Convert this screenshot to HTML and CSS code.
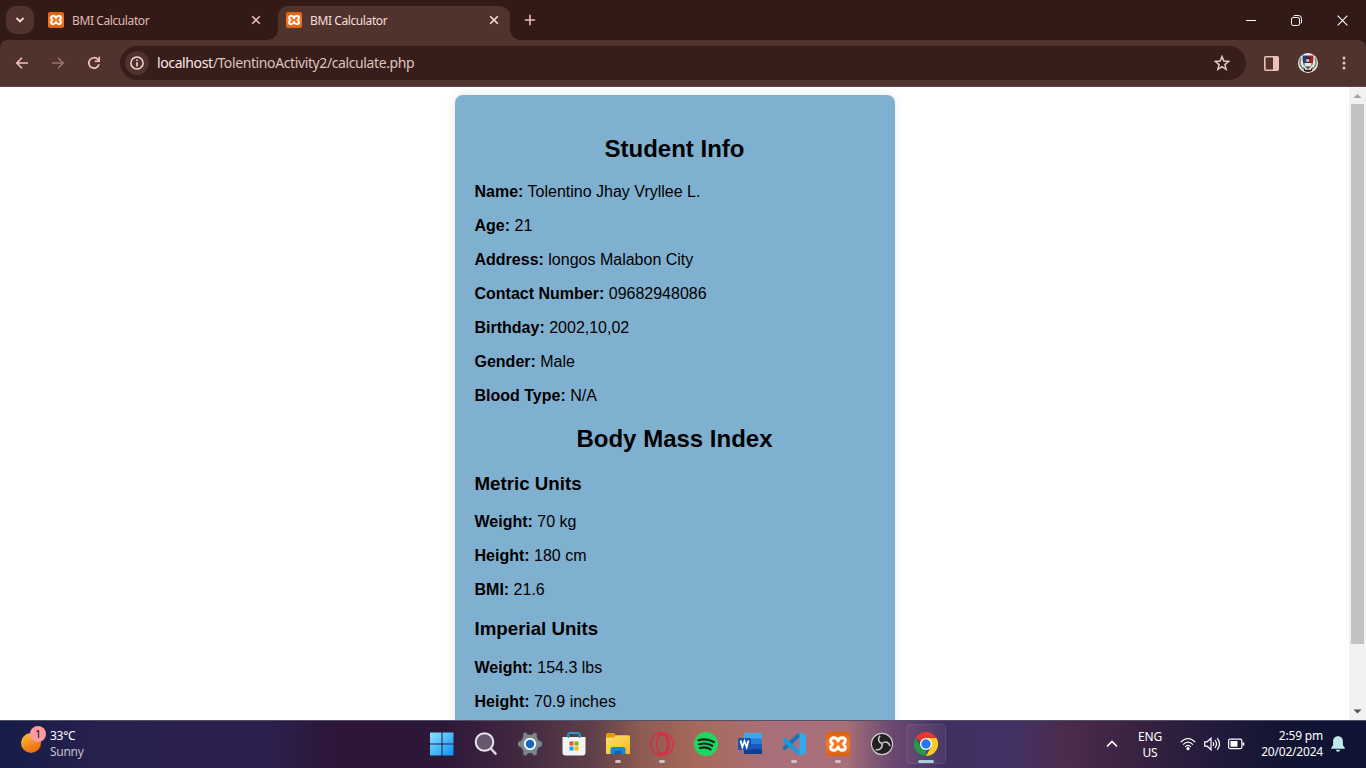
FILE: index.html
```html
<!DOCTYPE html>
<html lang="en">
<head>
<meta charset="utf-8">
<title>BMI Calculator</title>
<link rel="stylesheet" href="styles.css">
</head>
<body>
<svg class="defs" width="0" height="0" aria-hidden="true">
  <defs>
    <linearGradient id="gx" x2="0" y2="1"><stop stop-color="#d9600f"/><stop offset=".5" stop-color="#fb7a24"/><stop offset="1" stop-color="#d9600f"/></linearGradient>
    <symbol id="xampp" viewBox="0 0 24 24">
      <rect width="24" height="24" rx="2.5" fill="url(#gx)"/>
      <path d="M12 9C11 6.500 9.800 5.800 8 5.800 6 5.800 4.600 7 4.600 8.800c0 1.400.9 2.200 2 3.200-1.100 1-2 1.800-2 3.200 0 1.800 1.400 3 3.400 3 1.800 0 3-.7 4-3.200 1 2.500 2.200 3.200 4 3.200 2 0 3.400-1.200 3.400-3 0-1.400-.9-2.200-2-3.200 1.100-1 2-1.800 2-3.200 0-1.800-1.400-3-3.400-3-1.800 0-3 .7-4 3.200z" fill="none" stroke="#fff" stroke-width="3" stroke-linejoin="round"/>
    </symbol>
    <symbol id="close" viewBox="0 0 10 10"><path d="M1.200 1.200l7.600 7.600M8.800 1.200L1.200 8.800" fill="none" stroke="currentColor" stroke-width="1.600"/></symbol>
  </defs>
</svg>
<div class="screen">
  <header class="tabstrip">
    <button class="tab-search"><svg width="10" height="8" viewBox="0 0 10 8"><path d="M1.500 2L5 5.500 8.500 2" fill="none" stroke="#f5dcd8" stroke-width="1.800"/></svg></button>
    <div class="tab"><svg class="fav"><use href="#xampp"/></svg><span class="tab-title">BMI Calculator</span><svg class="x"><use href="#close"/></svg></div>
    <div class="tab active"><svg class="fav"><use href="#xampp"/></svg><span class="tab-title">BMI Calculator</span><svg class="x"><use href="#close"/></svg></div>
    <svg class="plus" viewBox="0 0 12 12"><path d="M6 .8v10.400M.8 6h10.400" stroke="#e9bdb5" stroke-width="1.600"/></svg>
    <div class="win-controls">
      <svg width="10" height="12" viewBox="0 0 10 12"><path d="M0 6.500h10" stroke="#fff"/></svg>
      <svg width="11" height="11" viewBox="0 0 11 11"><path d="M.5 4.200Q.5 2.500 2.200 2.500H6.800Q8.500 2.500 8.500 4.200V8.800Q8.500 10.500 6.800 10.500H2.200Q.5 10.500 .5 8.800zM2.500 1Q3 .5 4 .5H7.500Q10.500.5 10.500 3.500V7Q10.500 8.200 9.800 8.600" fill="none" stroke="#fff"/></svg>
      <svg width="11" height="11" viewBox="0 0 11 11"><path d="M.6.6l9.800 9.800M10.400.6L.6 10.400" stroke="#fff" stroke-width="1.100"/></svg>
    </div>
  </header>
  <div class="toolbar-wrap">
  <nav class="toolbar">
    <svg class="nav-ico" viewBox="0 0 16 16"><path d="M14 8H3M8 2.800L2.800 8 8 13.200" fill="none" stroke="#f2c4bb" stroke-width="1.600"/></svg>
    <svg class="nav-ico dim" viewBox="0 0 16 16"><path d="M2 8h11M8 2.800L13.200 8 8 13.200" fill="none" stroke="#f2c4bb" stroke-width="1.600"/></svg>
    <svg class="nav-ico" viewBox="0 0 16 16"><path d="M13 9.300A5.200 5.200 0 1 1 11.900 4.500L13.300 6" fill="none" stroke="#f2c4bb" stroke-width="1.700"/><path d="M14 1.800V7H8.800V5.500h3.600V1.800z" fill="#f2c4bb"/></svg>
    <div class="omnibox">
      <span class="info"><svg width="14" height="14" viewBox="0 0 14 14"><circle cx="7" cy="7" r="6.100" fill="none" stroke="#f5dcd8" stroke-width="1.500"/><path d="M7 6.200v4.200M7 3.500V5" stroke="#f5dcd8" stroke-width="1.600"/></svg></span>
      <span class="url"><b>localhost</b>/TolentinoActivity2/calculate.php</span>
      <svg class="star" width="16" height="16" viewBox="0 0 16 16"><path d="M8 1.600l1.800 4.500 4.800.4-3.700 3.100 1.200 4.700L8 11.700l-4.100 2.600 1.200-4.700L1.400 6.500l4.800-.4z" fill="none" stroke="#e3c9c4" stroke-width="1.500"/></svg>
    </div>
    <svg class="panel" width="15" height="15" viewBox="0 0 15 15"><rect x=".8" y=".8" width="13.400" height="13.400" rx="1" fill="none" stroke="#ecbfb7" stroke-width="1.600"/><path d="M9 1h5v13H9z" fill="#ecbfb7"/></svg>
    <svg class="avatar" width="20" height="20" viewBox="0 0 20 20"><circle cx="10" cy="10" r="10" fill="#f0eee8"/><path d="M3 5q-3 6 2 11M17 5q3 6-2 11" stroke="#6a8a63" stroke-width="1.500" fill="none"/><path d="M4.500 2.500H10V16Q4 14 4.500 2.500z" fill="#263c7b"/><path d="M15.500 2.500H10V16Q16 14 15.500 2.500z" fill="#a3222b"/><path d="M5 14q5 6 10 0l-1 4q-4 2-8 0z" fill="#152442"/><path d="M7.800 4h4.400v6H7.800z" fill="#30252a"/><circle cx="9.700" cy="7.500" r="1.800" fill="#e0aaa0"/><path d="M6.500 10h7v3.500h-7z" fill="#dce8ee"/><path d="M7 16.500h6" stroke="#d5b449"/></svg>
    <svg class="dots" width="4" height="14" viewBox="0 0 4 14" fill="#f2c4bb"><circle cx="2" cy="2" r="1.500"/><circle cx="2" cy="7" r="1.500"/><circle cx="2" cy="12" r="1.500"/></svg>
  </nav>
  </div>
  <div class="viewport">
    <main class="page">
      <section class="container">
        <h2>Student Info</h2>
        <p><strong>Name:</strong> Tolentino Jhay Vryllee L.</p>
        <p><strong>Age:</strong> 21</p>
        <p><strong>Address:</strong> longos Malabon City</p>
        <p><strong>Contact Number:</strong> 09682948086</p>
        <p><strong>Birthday:</strong> 2002,10,02</p>
        <p><strong>Gender:</strong> Male</p>
        <p><strong>Blood Type:</strong> N/A</p>
        <h2>Body Mass Index</h2>
        <h3>Metric Units</h3>
        <p><strong>Weight:</strong> 70 kg</p>
        <p><strong>Height:</strong> 180 cm</p>
        <p><strong>BMI:</strong> 21.6</p>
        <h3>Imperial Units</h3>
        <p><strong>Weight:</strong> 154.3 lbs</p>
        <p><strong>Height:</strong> 70.9 inches</p>
      </section>
    </main>
    <div class="scrollbar">
      <svg width="17" height="17" viewBox="0 0 17 17"><path d="M4.500 11L8.500 7l4 4z" fill="#a3a3a3"/></svg>
      <div class="thumb"></div>
      <svg width="17" height="17" viewBox="0 0 17 17"><path d="M4.500 6.500l4 4 4-4z" fill="#505050"/></svg>
    </div>
  </div>
  <footer class="taskbar">
    <div class="weather">
      <svg width="26" height="28" viewBox="0 0 26 28"><defs><linearGradient id="sun" x1=".2" x2=".7" y2="1"><stop stop-color="#f6bd38"/><stop offset="1" stop-color="#ee650b"/></linearGradient></defs><circle cx="10" cy="17" r="10" fill="url(#sun)"/><circle cx="17" cy="8" r="8" fill="#ff99a4"/></svg>
      <span class="badge">1</span>
      <div class="wtext"><span>33°C</span><span class="muted">Sunny</span></div>
    </div>
    <div class="apps">
      <div class="app"><svg viewBox="0 0 24 24"><defs><linearGradient id="win" x2="1" y2="1"><stop stop-color="#8be4ff"/><stop offset="1" stop-color="#0a91f8"/></linearGradient></defs><path d="M0 .5h11.500v11H0zM12.500.500h11v11h-11zM0 12.500h11.500v11H0zM12.500 12.500h11v11h-11z" fill="url(#win)"/></svg></div>
      <div class="app"><svg viewBox="0 0 24 24"><circle cx="10.500" cy="10" r="8.800" fill="#69576f" stroke="#e7e4ea" stroke-width="2"/><path d="M16.800 16.500l4.700 5.200" stroke="#d9d6de" stroke-width="2.500" stroke-linecap="round"/></svg></div>
      <div class="app"><svg viewBox="0 0 24 24"><path d="M5.500 1.200L8 .8 9.800 3h4.400L16 .8l2.700 1L18.500 5l1.800 3.500 3.700 2v3l-3.700 2-1.800 3.500.2 3.200-2.700 1.200L14 21h-4l-2 2.400-2.700-1.200.2-3.200-1.800-3.500L0 13.500v-3l3.700-2L5.500 5z" fill="#7b868f" stroke="#7b868f" stroke-linejoin="round" stroke-width=".5"/><circle cx="12" cy="12" r="5.200" fill="#1367bd" stroke="#eef3f7" stroke-width="2"/></svg></div>
      <div class="app"><svg viewBox="0 0 24 24"><path d="M6.200 6V2.700Q6.200 1 8 1h8Q17.800 1 17.800 2.700V6" fill="none" stroke="#27b3ee" stroke-width="1.700"/><path d="M.5 5h23v15.500q0 3-3 3h-17q-3 0-3-3z" fill="#f4f4f5"/><path d="M6.500 1v5M17.500 1v5" stroke="#1796d5" stroke-width="1.500"/><path d="M7.500 9.500h4v4h-4z" fill="#f15022"/><path d="M12.500 9.500h4v4h-4z" fill="#7cb806"/><path d="M7.500 14.500h4v4h-4z" fill="#0aa3ed"/><path d="M12.500 14.500h4v4h-4z" fill="#fcb809"/></svg></div>
      <div class="app open"><svg viewBox="0 0 24 24"><defs><linearGradient id="fold" x2="1" y2="1"><stop stop-color="#ffdf72"/><stop offset="1" stop-color="#f8b91e"/></linearGradient></defs><path d="M0 2.500Q0 1 1.500 1H8l2.500 2.500v5H0z" fill="#df9b08"/><path d="M0 5.500h8l2-2.200h12.500Q24 3.300 24 4.800V22H0z" fill="url(#fold)"/><path d="M4.500 17q0-2 2-2h11q2 0 2 2v5h-15z" fill="#1686d4"/><path d="M8.500 19h7v3h-7z" fill="#0a64a8"/></svg></div>
      <div class="app open"><svg viewBox="0 0 24 24" fill="none" stroke="#ec1d42" stroke-width="1.100"><circle cx="12" cy="12" r="11.500"/><ellipse cx="12" cy="12" rx="5.500" ry="9.800"/><path d="M8.500 3.200C12 .5 19.300 2.500 19.300 12S12 23.500 8.500 20.800"/></svg></div>
      <div class="app"><svg viewBox="0 0 24 24"><circle cx="12" cy="12" r="12" fill="#1ed760"/><path d="M4.500 8.200q8-2.200 15.500 1.800M5.200 12.200q7-2 13 1.600M6 16q6-1.600 10.500 1.300" fill="none" stroke="#10251a" stroke-width="2.200" stroke-linecap="round"/></svg></div>
      <div class="app"><svg viewBox="0 0 24 24"><path d="M6 1h18v6H6z" fill="#41a5ee"/><path d="M6 6.500h18V12H6z" fill="#2b7cd3"/><path d="M6 12h18v5.500H6z" fill="#185abd"/><path d="M6 17h18v5H6z" fill="#103f91"/><rect y="6" width="13" height="12" rx="1" fill="#1852b0"/><path d="M2.500 8.500l1.800 6.500 2.200-6 2.200 6 1.800-6.500" fill="none" stroke="#fff" stroke-width="1.800"/></svg></div>
      <div class="app open"><svg viewBox="0 0 24 24"><path d="M1.500 17L17.500 2.500" stroke="#1278bb" stroke-width="4"/><path d="M1.500 7l16 14.500" stroke="#159be0" stroke-width="4"/><path d="M17.500.2L24 3v18l-6.500 2.800z" fill="#31a9f1"/></svg></div>
      <div class="app open"><svg viewBox="0 0 24 24"><use href="#xampp"/></svg></div>
      <div class="app"><svg viewBox="0 0 24 24"><circle cx="12" cy="12" r="10.600" fill="#211f22" stroke="#d0cccd" stroke-width="1.100"/><g fill="none" stroke="#c8c4c6" stroke-width="1.600"><path d="M12 11.500C8 10 7.800 6.500 10 3.800"/><path d="M12 11.500C15.500 8.500 19 10.500 20 14"/><path d="M12 11.500C13 16 9.500 18.500 5.500 17.500"/></g></svg></div>
      <div class="app open current"><svg viewBox="0 0 24 24"><path d="M12 12L1.600 6A12 12 0 0 1 22.400 6z" fill="#e5392d"/><path d="M12 12l-.1 12A12 12 0 0 1 1.600 6L6.800 15z" fill="#229a48"/><path d="M12 6h10.400A12 12 0 0 1 11.900 24l5.300-9z" fill="#fdca21"/><circle cx="12" cy="12" r="6" fill="#fff"/><circle cx="12" cy="12" r="4.700" fill="#2a76e8"/></svg></div>
    </div>
    <div class="tray">
      <svg class="up" width="12" height="8" viewBox="0 0 12 8"><path d="M1 6.500l5-5 5 5" fill="none" stroke="#fff" stroke-width="1.600"/></svg>
      <div class="lang"><span>ENG</span><span>US</span></div>
      <svg class="wifi" width="16" height="14" viewBox="0 0 16 14" fill="none" stroke="#fff" stroke-width="1.200"><path d="M.7 5.200q7.300-7.400 14.600 0M3 7.600q5-5 10 0M5.200 9.800q2.800-2.800 5.600 0"/><circle cx="8" cy="11.600" r="1" fill="#fff"/></svg>
      <svg class="vol" width="17" height="14" viewBox="0 0 17 14" fill="none" stroke="#fff" stroke-width="1.200"><path d="M.7 4.800h2.500L7 1.200v11.600L3.200 9.200H.7zM9 5q1.500 2 0 4M11 3q3 4 0 8M13.200 1.200q4.600 5.800 0 11.600"/></svg>
      <svg class="bat" width="17" height="12" viewBox="0 0 17 12"><rect x=".6" y="1.100" width="13.300" height="9.600" rx="1.800" fill="none" stroke="#fff" stroke-width="1.200"/><path d="M2.500 3h7v5.800h-7zM14.500 4.500h1.800v3h-1.800z" fill="#fff"/></svg>
      <div class="clock"><span>2:59 pm</span><span>20/02/2024</span></div>
      <svg class="bell" width="14" height="16" viewBox="0 0 14 16"><path d="M7 .3c3 0 4.900 2.200 4.900 5V9L13.800 12v.8H.2V12L2.100 9V5.300C2.100 2.500 4 .3 7 .3zM4.700 13.800h4.600Q8.800 15.700 7 15.700t-2.300-1.900z" fill="#bfe9ef"/></svg>
    </div>
  </footer>
</div>
</body>
</html>
```
FILE: styles.css
```css
* { box-sizing: border-box; }
body { margin: 0; overflow: hidden; }
svg { display: block; flex: none; }
.defs { position: absolute; }
.screen { width: 1366px; height: 768px; display: flex; flex-direction: column; font-family: "Noto Sans", "Open Sans", sans-serif; background: #fff; }

.tabstrip { height: 40px; flex: none; background: #321a16; display: flex; align-items: center; padding-left: 6px; }
.tab-search { width: 28px; height: 28px; border: 0; border-radius: 10px; background: #51332e; padding: 0; display: flex; align-items: center; justify-content: center; }
.tab { width: 244px; height: 34px; display: flex; align-items: center; padding: 0 17px 6px 14px; align-self: flex-end; font-size: 12px; color: #e0bbb4; }
.tab.active { width: 232px; padding: 0 11px 6px 8px; background: #51332e; border-radius: 10px 10px 0 0; color: #f8dfda; position: relative; }
.tab.active::before, .tab.active::after { content: ""; position: absolute; bottom: 0; width: 10px; height: 10px; }
.tab.active::before { left: -10px; background: radial-gradient(circle at 0 0, transparent 9.500px, #51332e 10px); }
.tab.active::after { right: -10px; background: radial-gradient(circle at 100% 0, transparent 9.500px, #51332e 10px); }
.fav { width: 16px; height: 16px; margin-right: 8px; }
.tab-title { flex: 1; letter-spacing: -.4px; white-space: nowrap; }
.x { width: 10px; height: 10px; }
.plus { width: 12px; height: 12px; margin-left: 14px; }
.win-controls { margin-left: auto; display: flex; align-items: center; gap: 35px; padding-right: 18px; }

.toolbar-wrap { flex: none; background: #321a16; }
.toolbar { height: 47px; background: #51332e; display: flex; align-items: center; padding: 0 20px 0 14px; border-radius: 8px 8px 0 0; border-bottom: 1px solid #60443f; }
.nav-ico { width: 16px; height: 16px; margin-right: 20px; }
.dim { opacity: .45; }
.toolbar .nav-ico:nth-child(3) { margin-right: 18px; }
.omnibox { width: 1126px; height: 34px; border-radius: 17px; background: #381e1a; display: flex; align-items: center; padding: 0 16px 0 5px; }
.info { width: 24px; height: 24px; border-radius: 50%; background: #51332e; display: flex; align-items: center; justify-content: center; margin-right: 8px; }
.url { flex: 1; padding-bottom: 2px; font-size: 14px; color: #dcc4bf; letter-spacing: -.39px; white-space: nowrap; }
.url b { font-weight: 400; color: #fbe9e5; }
.panel { margin-left: 18px; }
.avatar { margin-left: 19px; }
.dots { margin-left: 24px; }

.viewport { height: 633px; flex: none; display: flex; overflow: hidden; }
.page { flex: 1; padding: 8px; font-family: Arial, "Liberation Sans", sans-serif; font-size: 16px; color: #000; }
.container { width: 440px; min-height: 700px; margin: 0 auto; padding: 20px; background: #80b0d0; border-radius: 8px; box-shadow: 0 0 10px rgba(0,0,0,.1); overflow: auto; }
.container h2 { text-align: center; font-size: 24px; margin: 19.920px 0; }
.container h3 { font-size: 18.720px; margin: 18.720px 0; }
.container p { margin: 16px 0; }
.scrollbar { width: 17px; background: #f1f1f1; display: flex; flex-direction: column; align-items: center; justify-content: space-between; }
.thumb { width: 13px; height: 540px; background: #c1c1c1; margin-bottom: 59px; }

.taskbar { height: 48px; flex: none; display: grid; grid-template-columns: 420px 528px 1fr; border-top: 1px solid #545067; color: #fff; font-size: 12px; background: linear-gradient(90deg, #151c48 0, #29204e 100px, #2b1f4d 270px, #2d1638 335px, #2d1739 440px, #412940 520px, #60414a 595px, #8c5b52 640px, #a8695b 700px, #a97079 770px, #a97079 845px, #6c4a72 890px, #422f61 945px, #423165 1010px, #4b2c4a 1070px, #34213f 1150px, #211a3b 1220px, #111331 1290px, #101437 1366px); }
.weather { display: flex; padding: 5px 0 0 21px; position: relative; }
.badge { position: absolute; left: 35px; top: 5px; color: #111; font-size: 11px; line-height: 16px; }
.wtext { display: flex; flex-direction: column; line-height: 16px; padding: 2px 0 0 3px; letter-spacing: -.3px; }
.muted { color: #c5c0d0; }
.apps { display: flex; }
.app { width: 44px; padding-bottom: 1px; display: flex; align-items: center; justify-content: center; position: relative; }
.app svg { width: 24px; height: 24px; }
.app.open::after { content: ""; position: absolute; bottom: 5px; left: 19px; width: 6px; height: 3px; border-radius: 2px; background: #d0bfc4; }
.app.current::before { content: ""; position: absolute; inset: 3px 2px 4px; border: 1px solid rgba(255,255,255,.07); border-radius: 4px; background: rgba(255,255,255,.05); }
.app.current svg { position: relative; }
.app.open.current::after { left: 14px; width: 16px; background: #a5cddb; }
.tray { display: flex; align-items: center; justify-content: flex-end; padding: 0 21px 2px 0; }
.lang, .clock { display: flex; flex-direction: column; line-height: 16px; letter-spacing: -.2px; }
.lang { width: 26px; align-items: center; margin: 3px 17px 0 19px; }
.clock { width: 64px; align-items: flex-end; margin: 1px 8px 0 14px; white-space: nowrap; }
.vol { margin: 0 7px 0 8px; }
```
